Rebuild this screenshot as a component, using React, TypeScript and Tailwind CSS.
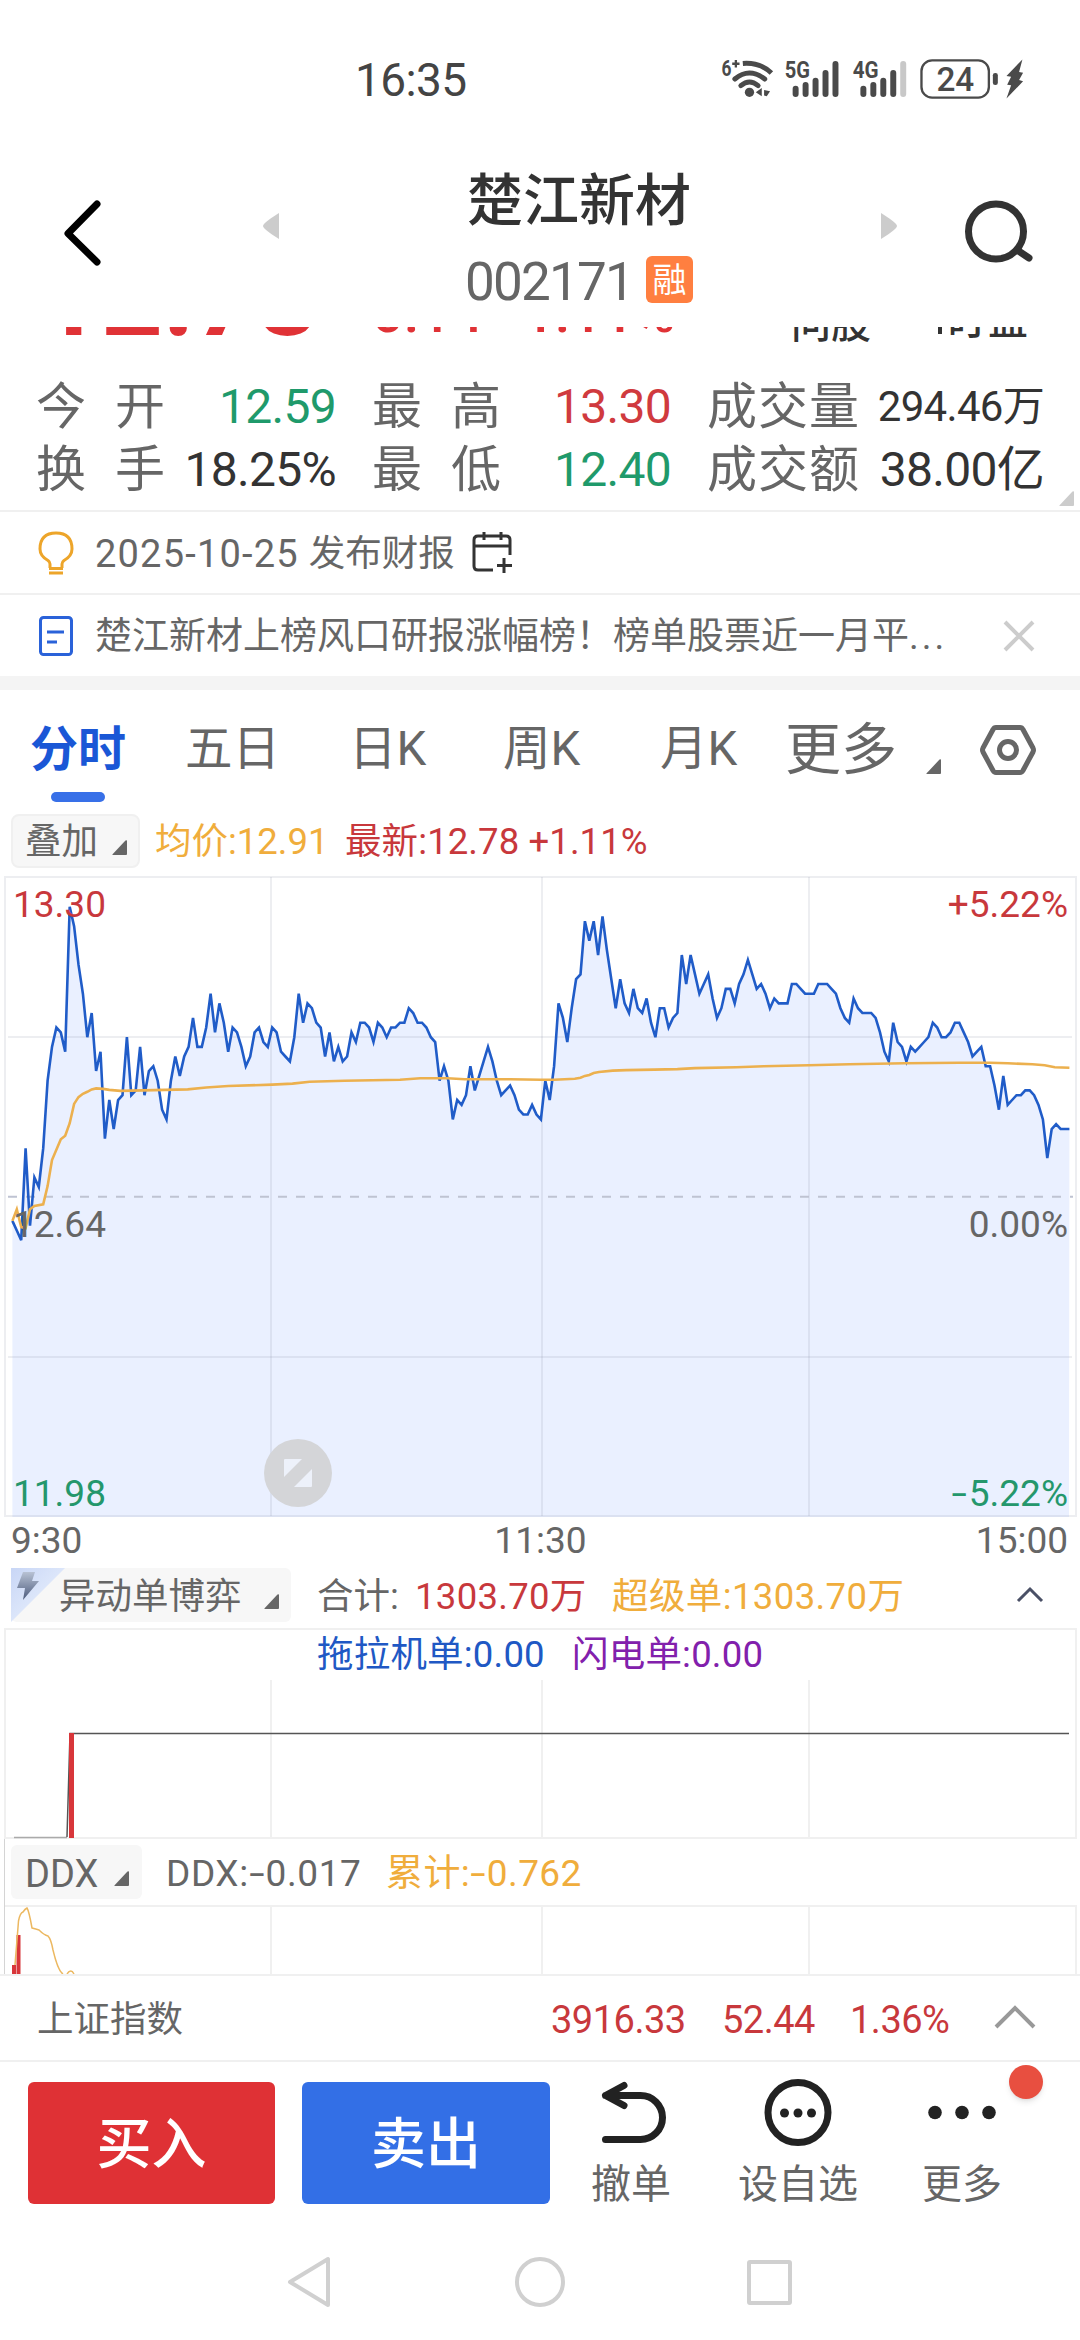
import React from "react";
import clsx from "clsx";

// price offsets in cents from the previous close (12.64), one per minute
const prices = [
  -5, -7, -9, 10, -6, 4, 2, 10, 24, 31, 35, 34, 30, 60, 56, 48, 42, 33, 38, 26,
  30, 12, 20, 14, 20, 21, 33, 21, 22, 31, 21, 26, 27, 24, 18, 16, 24, 29, 25,
  29, 31, 37, 31, 31, 35, 42, 34, 40, 36, 30, 35, 34, 31, 27, 29, 34, 35, 32,
  31, 35, 34, 30, 29, 28, 33, 42, 36, 40, 39, 36, 35, 29, 34, 28, 31, 28, 29,
  34, 32, 36, 36, 35, 32, 36, 35, 33, 35, 35, 36, 36, 39, 38, 36, 36, 35, 33,
  32, 24, 27, 24, 16, 20, 19, 21, 27, 22, 25, 28, 31, 28, 24, 21, 22, 23, 21,
  18, 17, 17, 19, 17, 16, 24, 20, 27, 40, 37, 32, 39, 45, 46, 57, 53, 57, 50,
  58, 51, 45, 39, 45, 40, 38, 43, 39, 38, 41, 36, 33, 39, 39, 35, 37, 38, 50,
  44, 50, 46, 42, 44, 46, 41, 37, 39, 43, 43, 40, 44, 46, 49, 46, 43, 44, 42,
  39, 41, 40, 40, 40, 44, 44, 43, 42, 42, 42, 44, 44, 44, 43, 42, 39, 37, 36,
  41, 39, 38, 38, 38, 37, 34, 30, 28, 36, 32, 31, 28, 31, 30, 31, 32, 33, 36,
  35, 33, 33, 34, 36, 36, 34, 32, 29, 30, 31, 27, 27, 23, 18, 25, 19, 20, 21,
  21, 22, 22, 21, 19, 16, 8, 14, 15, 14, 14, 14,
];

// [minute, cents]
const average = [
  [0, -5], [1, -2.6], [2, -6.3], [3, -6.5], [4, -2.6], [5, -1.9], [7, -1.6],
  [8, 2.2], [9, 7.6], [11, 11.9], [12, 12.6], [13, 15.2], [14, 19.2],
  [15, 20.6], [16, 21.3], [17, 21.7], [18, 22.2], [19, 22.4], [20.6, 22.3],
  [22, 22.1], [24.5, 21.9], [34.7, 22.1], [39.8, 22.2], [44, 22.6],
  [49, 22.9], [59, 23.2], [63.6, 23.4], [67.5, 23.8], [75.4, 24], [88, 24.2],
  [92.6, 24.5], [98.8, 24.5], [102.7, 24.3], [113, 24.3], [120, 24.2],
  [123, 24.2], [127.7, 24.4], [129, 24.6], [130, 25], [131, 25.2],
  [132, 25.6], [133.2, 25.8], [136.3, 26.1], [139.4, 26.2], [145.7, 26.3],
  [151, 26.4], [155, 26.6], [164.4, 26.8], [170.6, 27], [180.8, 27.2],
  [190, 27.4], [202.7, 27.6], [215, 27.7], [222, 27.7], [226, 27.6],
  [231.6, 27.4], [234.4, 27.2], [236.7, 26.8], [240, 26.7],
];

const px = (minute: number) => 12.4 + minute * 4.404;
const py = (cents: number) => 320.7 - cents * 4.833;

const priceLine = prices
  .map((p, i) => `${px(i).toFixed(1)},${py(p).toFixed(1)}`)
  .join(" ");
const averageLine = average
  .map(([m, c]) => `${px(m).toFixed(1)},${py(c).toFixed(1)}`)
  .join(" ");

const gridX = [271, 542, 809];

const stats = [
  { label: ["今", "开"], value: "12.59", color: "text-[#1f9a6b]" },
  { label: ["最", "高"], value: "13.30", color: "text-[#d03a3e]" },
  { label: ["成", "交", "量"], value: "294.46万", color: "text-[#333]", small: true },
  { label: ["换", "手"], value: "18.25%", color: "text-[#333]" },
  { label: ["最", "低"], value: "12.40", color: "text-[#1f9a6b]" },
  { label: ["成", "交", "额"], value: "38.00亿", color: "text-[#333]" },
];

const Corner = ({ className }: { className?: string }) => (
  <svg viewBox="0 0 15 15" className={clsx("h-[15px] w-[15px]", className)}>
    <path d="M15 1v13q0 1-1 1H1q-1 0-.4-.8L13.500.6Q15-.5 15 1z" fill="currentColor" />
  </svg>
);

const StatusBar = () => (
  <div className="flex h-[120px] items-start justify-between pr-[39px] pl-[355px] text-[#444]">
    <span className="mt-[57px] text-[46px] tracking-[-0.6px]">16:35</span>
    <svg viewBox="0 0 1024 240" className="mt-10 h-20 w-[340px] text-[#4a4a4a]" fill="currentColor">
      <g fontWeight="700" fontFamily="Roboto">
        <text x="62" y="109" fontSize="66" textLength="30" lengthAdjust="spacingAndGlyphs">6</text>
        <text x="252" y="115" fontSize="70" textLength="76" lengthAdjust="spacingAndGlyphs">5G</text>
        <text x="457" y="115" fontSize="70" textLength="78" lengthAdjust="spacingAndGlyphs">4G</text>
      </g>
      <text x="709" y="152" fontSize="102" fontWeight="500" fontFamily="Roboto" textLength="114" lengthAdjust="spacingAndGlyphs">24</text>
      <g fill="none" stroke="currentColor" strokeWidth="15">
        <path d="M94 71h22M105 60v22" strokeWidth="7" />
        <path d="M126 70q52-4 86 29" />
        <path d="M102 117q43-36 90 0" strokeLinecap="round" />
        <path d="M120 137q26-22 52 0" strokeLinecap="round" />
      </g>
      <circle cx="146" cy="157" r="14" />
      <path d="M183 144v25l-18-12zM190 150l18 4-10 15-8-2z" />
      {[276, 306, 336, 366, 396].map((x, i) => {
        const y = [137, 126, 113, 90, 63][i];
        return (
          <g key={x}>
            <rect x={x} y={y} width="18" height={171 - y} rx="9" />
            <rect x={x + 204} y={y} width="18" height={171 - y} rx="9" fill={i === 4 ? "#c8c8c8" : undefined} />
          </g>
        );
      })}
      <rect x="664" y="61" width="203" height="112" rx="32" fill="none" stroke="currentColor" strokeWidth="7" />
      <rect x="879" y="99" width="15" height="36" rx="7" />
      <path d="M968 58l-48 50 14 2-12 24 12 2-14 40 50-52-12-4 12-22-12-2z" />
    </svg>
  </div>
);

const Header = () => (
  <div className="flex h-[207px] items-start pl-[62px]">
    <svg viewBox="0 0 40 70" className="mt-[78px] h-[70px] w-10" fill="none" stroke="#000" strokeWidth="7" strokeLinecap="round" strokeLinejoin="round">
      <path d="M35 6L6 35.500L35 64" />
    </svg>
    <svg viewBox="0 0 16 28" className="mt-[92px] ml-[161px] h-7 w-4">
      <path d="M16 1v26Q0 17 0 14T16 1z" fill="#ccc" />
    </svg>
    <div className="flex w-[602px] flex-col items-center pr-[2px]">
      <span className="mt-[53px] text-[56px] font-medium text-[#333]">楚江新材</span>
      <div className="mt-[23px] flex items-start">
        <span className="pt-[4px] text-[53px] tracking-[-1.8px] text-[#666]">002171</span>
        <span className="mt-1 ml-[13px] flex h-[47px] w-[47px] items-center justify-center rounded-md bg-[#ff7f40] text-[34px] text-white">
          融
        </span>
      </div>
    </div>
    <svg viewBox="0 0 16 28" className="mt-[92px] mr-[67px] h-7 w-4">
      <path d="M0 1v26Q16 17 16 14T0 1z" fill="#ccc" />
    </svg>
    <svg viewBox="0 0 71 70" className="mt-[77px] h-[70px] w-[71px]" fill="none" stroke="#333" strokeWidth="7">
      <circle cx="32" cy="34.500" r="27.500" />
      <path d="M53 53l12 8" strokeLinecap="round" />
    </svg>
  </div>
);

// price summary, half scrolled under the header
const ScrolledSummary = () => (
  <div className="flex h-12 items-start overflow-hidden text-[#e03236]">
    <span className="-mt-[83px] ml-[39px] w-[333px] text-[108px] font-bold">12.78</span>
    <span className="-mt-[42px] w-[151px] text-[56px] font-medium">0.14</span>
    <span className="-mt-[42px] w-[268px] text-[56px] font-medium">1.11%</span>
    <span className="-mt-[22px] w-[147px] text-[40px] font-medium text-[#333]">问股</span>
    <span className="h-[7px] w-1 bg-[#333]" />
    <span className="-mt-[26px] ml-[6px] text-[40px] font-medium text-[#333]">盯盘</span>
  </div>
);

const Stats = () => (
  <div className="relative h-[137px] border-b-2 border-[#f0f0f0]">
    <div className="grid grid-cols-[300px_299px_337px] gap-x-9 pl-[36px]">
      {stats.map((s) => (
        <div key={s.value} className="flex h-[63px] items-center justify-between">
          <div
            className={clsx(
              "flex justify-between text-[50px] text-[#666]",
              s.label.length === 3 ? "w-[152px]" : "w-[129px]"
            )}
          >
            {s.label.map((c) => (
              <span key={c}>{c}</span>
            ))}
          </div>
          <span className={clsx(s.small ? "text-[42px]" : "text-[48px]", "tracking-[-0.7px]", s.color)}>
            {s.value}
          </span>
        </div>
      ))}
    </div>
    <Corner className="absolute right-[6px] bottom-[4px] text-[#ccc]" />
  </div>
);

const Notices = () => (
  <>
    <div className="flex h-[83px] items-center border-b-2 border-[#f0f0f0] pl-[37px] text-[38px] text-[#666]">
      <svg viewBox="0 0 38 44" className="h-11 w-[38px]" fill="none" stroke="#eda52a" strokeWidth="3">
        <path d="M13 37v-4q0-2-2-3.500Q3 25 3 18 3 2 19 2t16 16q0 7-8 11.500-2 1.500-2 3.500v4" />
        <path d="M12 37.500h14M12 42h14" />
      </svg>
      <span className="ml-5 pt-[3px] tracking-[1.2px]">2025-10-25</span>
      <span className="ml-[10px] pt-[3px] text-[36.5px]">发布财报</span>
      <svg viewBox="0 0 42 44" className="ml-4 h-11 w-[42px]" fill="none" stroke="#333" strokeWidth="3">
        <path d="M22 39H7q-4 0-4-4V9q0-4 4-4h28q4 0 4 4v15M3 15h36M13 1v8M30 1v8M33 27v15M26 34.500h15" />
      </svg>
    </div>
    <div className="flex h-[81px] items-center pl-[38px] text-[37px] text-[#666]">
      <svg viewBox="0 0 36 42" className="h-[42px] w-9" fill="none" stroke="#2a62d9" strokeWidth="3">
        <rect x="2.500" y="2.500" width="31" height="37" rx="3" />
        <path d="M9 17h17M9 27h10" />
      </svg>
      <span className="ml-[21px] w-[908px] pt-[2px]">
        楚江新材上榜风口研报涨幅榜！榜单股票近一月平<span className="tracking-[3px]">...</span>
      </span>
      <svg viewBox="0 0 32 32" className="h-8 w-8" stroke="#ccc" strokeWidth="4">
        <path d="M2 2l28 28M30 2L2 30" />
      </svg>
    </div>
  </>
);

const Tabs = () => (
  <div className="box-content flex h-[116px] items-center border-t-[14px] border-[#f4f4f4] text-[47.500px] text-[#666]">
    <div className="relative ml-[30px] w-[155px] pt-[3px] text-[48px] font-bold text-[#1a57d6]">
      分时
      <span className="absolute top-[69px] left-[21px] h-[10px] w-[54px] rounded-full bg-[#3870e8]" />
    </div>
    <span className="w-[164px] pt-[3px]">五日</span>
    <span className="w-[154px] pt-[3px]">日K</span>
    <span className="w-[157px] pt-[3px]">周K</span>
    <span className="w-[125px] pt-[3px]">月K</span>
    <span className="w-[141px] pt-[4px] text-[56px]">更多</span>
    <Corner className="mt-9" />
    <svg viewBox="0 0 58 52" className="mt-[3px] ml-[38px] h-[52px] w-[58px]" fill="none" stroke="#666" strokeWidth="5">
      <path d="M17 3.500h24q2 0 3 2l10 18.500q1 2 0 4L44 46.500q-1 2-3 2H17q-2 0-3-2L4 28q-1-2 0-4L14 5.500q1-2 3-2z" />
      <circle cx="29" cy="26" r="8.500" />
    </svg>
  </div>
);

const PriceChart = () => (
  <div className="relative h-[641px] text-[37px]">
    <svg viewBox="0 0 1080 641" className="h-[641px] w-[1080px]" fill="none">
      <polygon points={`12.4,641 ${priceLine} 1069,641`} fill="#eaf0ff" />
      <g stroke="#8890a0" strokeOpacity="0.15" strokeWidth="2">
        <rect x="5" y="1" width="1071" height="639" />
        {gridX.map((x) => (
          <path key={x} d={`M${x} 1V640`} />
        ))}
        <path d="M8 161H1072M8 481H1072" />
      </g>
      <path d="M8 320.700H1073" stroke="#bfc3d2" strokeWidth="2" strokeDasharray="9 9" />
      <polyline points={priceLine} stroke="#205cc8" strokeWidth="2.600" />
      <polyline points={averageLine} stroke="#ecb04e" strokeWidth="2.600" />
    </svg>
    <span className="absolute top-[10px] left-[13px] text-[#c8383c]">13.30</span>
    <span className="absolute top-[10px] right-3 text-[#c8383c]">+5.22%</span>
    <span className="absolute top-[330px] left-[13px] text-[#666]">12.64</span>
    <span className="absolute top-[330px] right-3 text-[#666]">0.00%</span>
    <span className="absolute top-[599px] left-[13px] text-[#24976c]">11.98</span>
    <span className="absolute top-[599px] right-3 text-[#24976c]">
      <span className="mr-[5px] inline-block scale-x-150">-</span>5.22%
    </span>
    <svg viewBox="0 0 68 68" className="absolute top-[563px] left-[264px] h-[68px] w-[68px]">
      <circle cx="34" cy="34" r="34" fill="#d4d5d8" />
      <path d="M20 21q0-1 1-1h17L20 38zM48 47q0 1-1 1H30l18-18z" fill="#edf1fa" />
    </svg>
  </div>
);

const OrderPanel = () => (
  <>
    <div className="flex h-[66px] items-center text-[36.500px] text-[#666]">
      <div className="relative ml-[11px] flex h-[54px] w-[280px] items-center rounded-md bg-[#f7f7f7] pt-[4px] pl-[48px]">
        <svg viewBox="0 0 54 54" className="absolute top-0 left-0 h-[54px] w-[54px]">
          <defs>
            <linearGradient id="tag" x1="0" y1="0" x2="1" y2="1">
              <stop offset="0" stopColor="#c8d6f6" />
              <stop offset="0.5" stopColor="#dce6fa" />
            </linearGradient>
            <linearGradient id="bolt" x1="0" y1="0" x2="0" y2="1">
              <stop offset="0" stopColor="#b8c2d4" />
              <stop offset="1" stopColor="#4b5a7c" />
            </linearGradient>
          </defs>
          <path d="M0 0h54L0 54z" fill="url(#tag)" />
          <path d="M12 4h12l-3 9h7L12 32l2-12H6z" fill="url(#bolt)" />
        </svg>
        异动单博弈
        <Corner className="mt-[8px] ml-[22px]" />
      </div>
      <span className="ml-[26px] w-[98px] pt-1">合计: </span>
      <span className="w-[197px] pt-1 tracking-[0.3px] text-[#c8383c]">1303.70万</span>
      <span className="w-[404px] pt-1 tracking-[0.4px] text-[#f0ad3c]">超级单:1303.70万</span>
      <svg viewBox="0 0 28 18" className="h-[18px] w-7" fill="none" stroke="#4a5066" strokeWidth="3">
        <path d="M2 15L14 3l12 12" />
      </svg>
    </div>
    <div className="relative h-[211px] text-[36.500px]">
      <svg viewBox="0 0 1080 211" className="h-[211px] w-[1080px]" fill="none">
        <g stroke="#f0f0f0" strokeWidth="2">
          <rect x="5" y="1" width="1071" height="209" />
          {gridX.map((x) => (
            <path key={x} d={`M${x} 52V209`} />
          ))}
        </g>
        <path d="M14 209.500H67" stroke="#aaa" strokeWidth="1.500" />
        <path d="M67 209L70 105.500H1069" stroke="#555" strokeWidth="1.500" />
        <rect x="69" y="105" width="5" height="105" fill="#d8363a" />
      </svg>
      <div className="absolute top-[9px] left-[317px] flex">
        <span className="w-[255px] tracking-[0.2px] text-[#2058c4]">拖拉机单:0.00</span>
        <span className="tracking-[0.2px] text-[#8220ac]">闪电单:0.00</span>
      </div>
    </div>
  </>
);

const DdxPanel = () => (
  <div className="ml-[4px] border-l border-[#d4d4d4]">
    <div className="flex h-[66px] items-center text-[37px] text-[#666]">
      <div className="ml-[6px] flex h-[54px] w-[131px] items-center rounded-md bg-[#f7f7f7] pt-[3px] pl-[14px]">
        <span className="w-[89px] text-[38px]">DDX</span>
        <Corner className="mt-[9px]" />
      </div>
      <span className="ml-[24px] w-[220px] pt-[3px] tracking-[0.6px]">
        DDX:<span className="mx-[3px] inline-block scale-x-150">-</span>0.017
      </span>
      <span className="pt-[3px] tracking-[0.4px] text-[#f0ad3c]">
        累计:<span className="mx-[3px] inline-block scale-x-150">-</span>0.762
      </span>
    </div>
    <svg viewBox="5 0 1075 69" className="h-[69px] w-[1075px]" fill="none">
      <g stroke="#f0f0f0" strokeWidth="2">
        <path d="M5 1H1076V69" />
        {gridX.map((x) => (
          <path key={x} d={`M${x} 1V69`} />
        ))}
      </g>
      <rect x="12" y="60" width="4" height="9" fill="#d8363a" />
      <rect x="16.500" y="30" width="4" height="39" fill="#d8363a" />
      <path
        d="M15 60L18.500 16Q20 8 23 7Q25 4 27 3Q29 6 32 23Q36 24 39 25Q44 30 48 31Q51 34 53 45Q58 66 63 69M67 69Q71 63 74 69"
        stroke="#ecb860"
        strokeWidth="1.500"
      />
    </svg>
  </div>
);

const IndexBar = () => (
  <div className="flex h-[88px] items-center border-y-2 border-[#f0f0f0] pl-[37px] text-[38px] text-[#c8383c]">
    <span className="w-[514px] pt-1 text-[36.500px] text-[#666]">上证指数</span>
    <span className="w-[171px] pt-1 tracking-[-0.5px]">3916.33</span>
    <span className="w-[128px] pt-1 tracking-[-0.5px]">52.44</span>
    <span className="w-[144px] pt-1 tracking-[-0.5px]">1.36%</span>
    <svg viewBox="0 0 42 24" className="-mt-[2px] h-6 w-[42px]" fill="none" stroke="#999" strokeWidth="4">
      <path d="M2 22L21 3l19 19" />
    </svg>
  </div>
);

const Actions = () => (
  <div className="relative flex h-[163px] items-start pt-[20px] pl-7 text-[40px] text-[#666]">
    <button className="h-[122px] w-[247px] rounded-md bg-[#df3135] pt-[3px] text-[55px] font-medium text-white">买入</button>
    <button className="ml-[27px] h-[122px] w-[248px] rounded-md bg-[#336fe6] pt-[3px] text-[55px] font-medium text-white">卖出</button>
    <div className="-mt-[2px] ml-[41px] flex w-20 flex-col items-center">
      <svg viewBox="0 0 72 68" className="h-[68px] w-[72px]" fill="none" stroke="#222" strokeWidth="7" strokeLinecap="round" strokeLinejoin="round">
        <path d="M29 5.500L10.500 15.500L29 25.500M10.500 15.500h35a22 22 0 0 1 0 44h-35" />
      </svg>
      <span className="mt-[17px]">撤单</span>
    </div>
    <div className="-mt-[2px] ml-[66px] flex w-[122px] flex-col items-center">
      <svg viewBox="0 0 68 68" className="h-[68px] w-[68px] overflow-visible" fill="#222">
        <circle cx="34" cy="32.500" r="30" fill="none" stroke="#222" strokeWidth="7" />
        <circle cx="20.500" cy="33" r="4.500" />
        <circle cx="34" cy="33" r="4.500" />
        <circle cx="47.500" cy="33" r="4.500" />
      </svg>
      <span className="mt-[17px]">设自选</span>
    </div>
    <div className="-mt-[2px] ml-[63px] flex w-20 flex-col items-center">
      <svg viewBox="0 0 68 68" className="h-[68px] w-[68px]" fill="#222">
        <circle cx="7" cy="32.500" r="6.800" />
        <circle cx="34" cy="32.500" r="6.800" />
        <circle cx="61" cy="32.500" r="6.800" />
      </svg>
      <span className="mt-[17px]">更多</span>
    </div>
    <span className="absolute top-[3px] left-[1009px] h-[34px] w-[34px] rounded-full bg-[#e84f40] shadow-md" />
  </div>
);

const NavBar = () => (
  <div className="flex h-[115px] items-start pt-[30px] pl-[286px]">
    <svg viewBox="0 0 46 54" className="h-[54px] w-[46px]" fill="none" stroke="#d0d0d0" strokeWidth="4" strokeLinejoin="round">
      <path d="M42 4v46L4 27z" />
    </svg>
    <svg viewBox="0 0 54 54" className="ml-[181px] h-[54px] w-[54px]" fill="none" stroke="#d0d0d0" strokeWidth="4">
      <circle cx="27" cy="27" r="23" />
    </svg>
    <span className="mt-[5px] ml-[180px] h-[45px] w-[45px] rounded-[3px] border-4 border-[#d0d0d0]" />
  </div>
);

const App = () => {
  return (
    <div className="h-[2340px] w-[1080px] overflow-hidden bg-white font-['Roboto','Noto_Sans_CJK_SC',sans-serif] leading-none whitespace-nowrap">
      <StatusBar />
      <Header />
      <ScrolledSummary />
      <Stats />
      <Notices />
      <Tabs />
      <div className="flex h-[70px] items-center text-[36.500px]">
        <div className="ml-[11px] flex h-[54px] w-[129px] items-center rounded-lg border-2 border-[#f0f0f0] bg-[#f7f7f7] pt-[2px] pl-[12px] text-[#666]">
          叠加
          <Corner className="mt-[10px] ml-[14px]" />
        </div>
        <span className="ml-[15px] w-[190px] pt-[2px] text-[#f0ad3c]">均价:12.91</span>
        <span className="pt-[2px] tracking-[0.1px] text-[#c8383c]">最新:12.78 +1.11%</span>
      </div>
      <PriceChart />
      <div className="flex h-[45px] items-center justify-between pt-[2px] pr-3 pl-[11px] text-[37px] text-[#666]">
        <span className="w-[94px]">9:30</span>
        <span>11:30</span>
        <span>15:00</span>
      </div>
      <OrderPanel />
      <DdxPanel />
      <IndexBar />
      <Actions />
      <NavBar />
    </div>
  );
};

export default App;
